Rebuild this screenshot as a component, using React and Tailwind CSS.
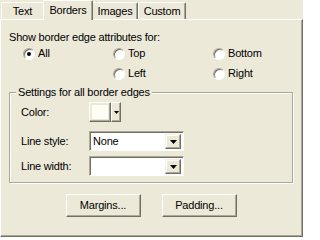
import React from 'react';

const Radio = ({ label, checked }) => (
  <div className="flex items-center gap-[3px] h-[13px]">
    <div className="w-[12px] h-[12px] rounded-full bg-white border border-t-[#ACA899] border-l-[#ACA899] border-r-white border-b-white shadow-[inset_1px_1px_0_#716F64] flex items-center justify-center">
      {checked && <div className="w-[4px] h-[4px] rounded-full bg-black" />}
    </div>
    <span className="leading-[13px]">{label}</span>
  </div>
);

const DownArrow = ({ w = 7, h = 4 }) => (
  <svg width={w} height={h} viewBox={`0 0 ${w} ${h}`}>
    <polygon points={`0,0 ${w},0 ${w / 2},${h}`} fill="#000" />
  </svg>
);

const Combo = ({ value }) => (
  <div className="w-[95px] h-[20px] bg-white border border-t-[#ACA899] border-l-[#ACA899] border-r-white border-b-white shadow-[inset_1px_1px_0_#716F64] flex items-center pl-[3px] pr-[2px] pt-[1px]">
    <span className="flex-1 leading-[13px]">{value}</span>
    <div className="w-[16px] h-[15px] bg-[#ECE9D8] border border-t-[#F1EFE2] border-l-[#F1EFE2] border-r-[#716F64] border-b-[#716F64] shadow-[inset_-1px_-1px_0_#ACA899,inset_1px_1px_0_white] flex items-center justify-center">
      <DownArrow />
    </div>
  </div>
);

const Button = ({ children }) => (
  <button className="w-[75px] h-[23px] bg-[#ECE9D8] border border-t-white border-l-white border-r-[#716F64] border-b-[#716F64] shadow-[inset_-1px_-1px_0_#ACA899] flex items-center justify-center leading-[13px]">
    {children}
  </button>
);

const Row = ({ label, children, className }) => (
  <div className={`flex items-center ${className}`}>
    <span className="w-[68px] leading-[13px]">{label}</span>
    {children}
  </div>
);

export default function App() {
  return (
    <div className="w-[303px] h-[237px] bg-[#ECE9D8] flex flex-col font-['Liberation_Sans',Arial,sans-serif] text-[11px] tracking-[-0.2px] text-black">
      {/* tabs */}
      <div className="flex items-end h-[19px] pl-[1px]">
        <div className="w-[42px] h-[17px] border-l border-t border-white rounded-tl-[2px] flex items-center justify-center pt-[1px]">Text</div>
        <div className="relative z-10 -mb-px w-[50px] h-[20px] bg-[#ECE9D8] border-l border-t border-r border-t-white border-l-white border-r-[#716F64] rounded-t-[2px] shadow-[inset_-1px_0_0_#ACA899] flex items-center justify-center pb-[1px]">Borders</div>
        <div className="w-[45px] h-[17px] border-t border-r border-t-white border-r-[#716F64] rounded-tr-[2px] shadow-[inset_-1px_0_0_#ACA899] flex items-center justify-center pt-[1px]">Images</div>
        <div className="w-[48px] h-[17px] border-l border-t border-r border-l-white border-t-white border-r-[#716F64] rounded-t-[2px] shadow-[inset_-1px_0_0_#ACA899] flex items-center justify-center pt-[1px]">Custom</div>
      </div>

      {/* panel */}
      <div className="flex-1 flex flex-col border border-t-white border-l-white border-r-[#716F64] border-b-[#716F64] shadow-[inset_-1px_-1px_0_#ACA899] pl-[8px] pr-[9px] pt-[11px]">
        <div className="h-[13px] leading-[13px]">Show border edge attributes for:</div>
        <div className="mt-[3px] ml-[14px] grid grid-cols-[90px_100px_auto] gap-y-[7px]">
          <Radio label="All" checked />
          <Radio label="Top" />
          <Radio label="Bottom" />
          <div />
          <Radio label="Left" />
          <Radio label="Right" />
        </div>

        {/* group box */}
        <div className="mt-[12px] border border-[#ACA899] shadow-[inset_1px_1px_0_white,1px_1px_0_white] pl-[11px] pb-[6px]">
          <div className="-mt-[7px] -ml-[5px] w-fit px-[2px] bg-[#ECE9D8] h-[13px] leading-[13px]">Settings for all border edges</div>
          <Row label="Color:" className="mt-[3px] h-[20px]">
            <div className="flex h-[20px]">
              <div className="w-[22px] h-[20px] border border-t-white border-l-white border-r-[#716F64] border-b-[#716F64] shadow-[inset_-1px_-1px_0_#ACA899] p-[2px] bg-[#ECE9D8]">
                <div className="w-full h-full bg-[#FFFFF8]" />
              </div>
              <div className="w-[10px] h-[20px] bg-[#ECE9D8] border border-t-white border-l-white border-r-[#716F64] border-b-[#716F64] shadow-[inset_-1px_-1px_0_#ACA899] flex items-center justify-center">
                <DownArrow w={5} h={3} />
              </div>
            </div>
          </Row>
          <Row label="Line style:" className="mt-[9px] h-[20px]">
            <Combo value="None" />
          </Row>
          <Row label="Line width:" className="mt-[5px] h-[20px]">
            <Combo value="" />
          </Row>
        </div>

        <div className="mt-[11px] flex justify-center gap-[21px]">
          <Button>Margins...</Button>
          <Button>Padding...</Button>
        </div>
      </div>
    </div>
  );
}
